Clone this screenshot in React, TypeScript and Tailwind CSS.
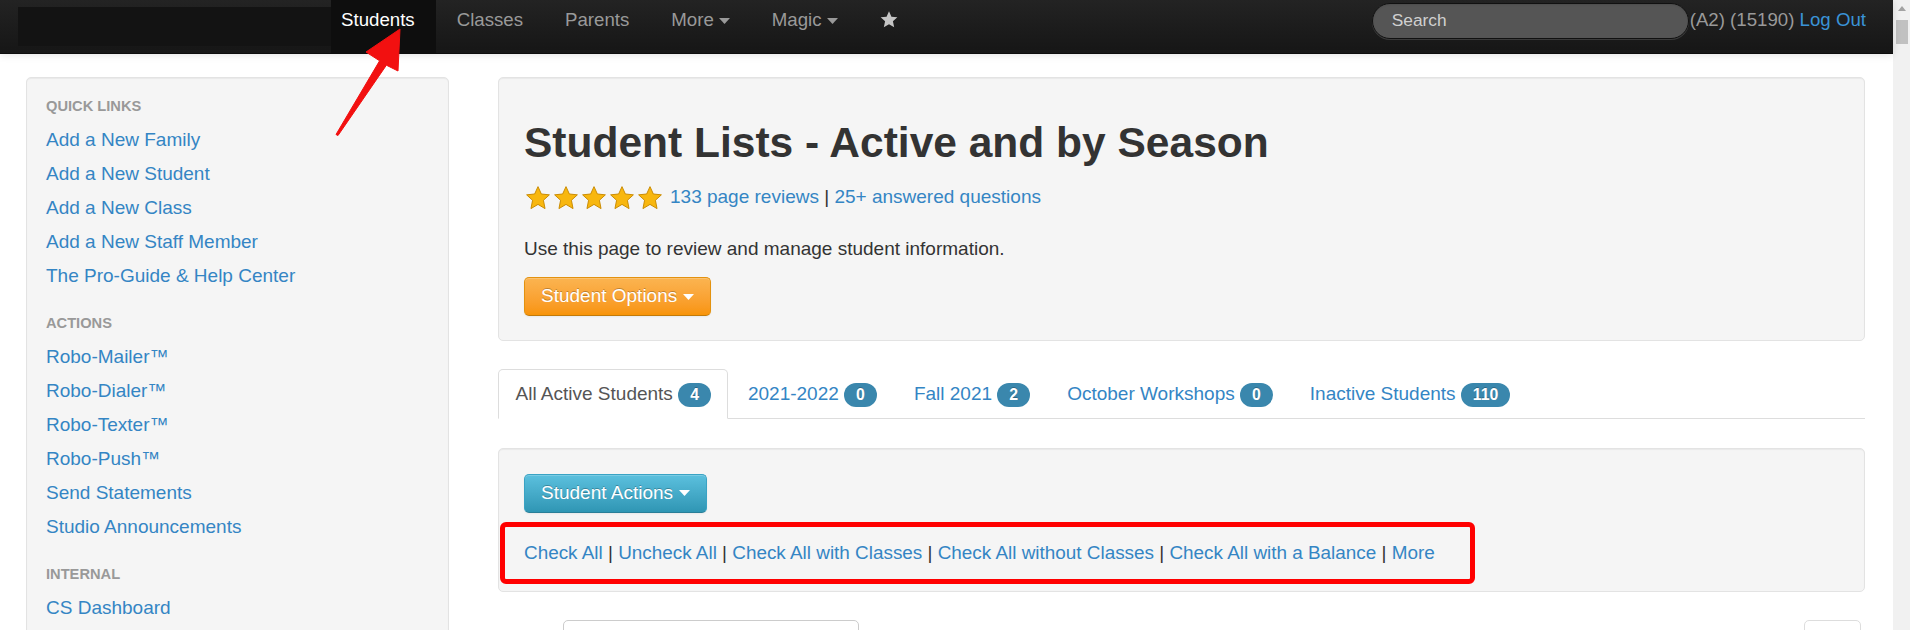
import React from "react";

function Caret({ className }: { className?: string }) {
  return (
    <svg width="11" height="6" viewBox="0 0 11 6" className={className}>
      <path d="M0 0H11L5.5 6Z" fill="currentColor" />
    </svg>
  );
}

function GoldStar() {
  return (
    <svg width="28" height="26" viewBox="0 0 24 24">
      <polygon
        points="12,1.5 15.1,8.3 22.5,9.1 17,14.1 18.5,21.8 12,17.9 5.5,21.8 7,14.1 1.5,9.1 8.9,8.3"
        fill="#f8b70f"
        stroke="#c98a00"
        strokeWidth="0.9"
        strokeLinejoin="round"
      />
    </svg>
  );
}

function Badge({ children }: { children: React.ReactNode }) {
  return (
    <span className="inline-block align-middle rounded-[12px] bg-[#3a87ad] px-[12px] text-[15.8px] font-bold leading-[24px] text-white [text-shadow:0_-1px_0_rgba(0,0,0,0.25)]">
      {children}
    </span>
  );
}

const quickLinks = [
  "Add a New Family",
  "Add a New Student",
  "Add a New Class",
  "Add a New Staff Member",
  "The Pro-Guide & Help Center",
];
const actionLinks = [
  "Robo-Mailer™",
  "Robo-Dialer™",
  "Robo-Texter™",
  "Robo-Push™",
  "Send Statements",
  "Studio Announcements",
];
const internalLinks = ["CS Dashboard"];

const tabs = [
  { label: "All Active Students", n: "4", active: true },
  { label: "2021-2022", n: "0" },
  { label: "Fall 2021", n: "2" },
  { label: "October Workshops", n: "0" },
  { label: "Inactive Students", n: "110" },
];

const checks = [
  "Check All",
  "Uncheck All",
  "Check All with Classes",
  "Check All without Classes",
  "Check All with a Balance",
  "More",
];

function SideHeading({ children, first }: { children: React.ReactNode; first?: boolean }) {
  return (
    <div
      className={
        first
          ? "h-[34px] flex items-center text-[14.67px] font-bold uppercase text-[#999]"
          : "mt-[13px] h-[34px] flex items-center text-[14.67px] font-bold uppercase text-[#999]"
      }
    >
      {children}
    </div>
  );
}

function SideLink({ children }: { children: React.ReactNode }) {
  return <a className="h-[34px] flex items-center text-[#3485c4]">{children}</a>;
}

export default function App() {
  return (
    <div className="relative flex h-[630px] w-[1910px] overflow-hidden bg-white font-['Liberation_Sans',Arial,sans-serif] text-[19px] text-[#333]">
      <div className="flex min-w-0 flex-1 flex-col">
        {/* Navbar */}
        <nav className="relative z-10 flex h-[54px] shrink-0 items-stretch border-b border-[#0c0c0c] bg-linear-to-b from-[#232323] to-[#161616] text-[18.67px] shadow-[0_1px_8px_rgba(0,0,0,0.12)]">
          <div className="ml-[18px] my-[7px] w-[313px] bg-[#131313]" />
          <a className="bg-[#0e0e0e] pl-[10px] pr-[21px] pt-[7px] leading-[26.67px] text-white">Students</a>
          <a className="px-[21px] pt-[7px] leading-[26.67px] text-[#999]">Classes</a>
          <a className="px-[21px] pt-[7px] leading-[26.67px] text-[#999]">Parents</a>
          <a className="flex items-start px-[21px] pt-[7px] leading-[26.67px] text-[#999]">
            <span>More</span>
            <Caret className="ml-[5px] mt-[11px]" />
          </a>
          <a className="flex items-start px-[21px] pt-[7px] leading-[26.67px] text-[#999]">
            <span>Magic</span>
            <Caret className="ml-[5px] mt-[11px]" />
          </a>
          <a className="px-[21px] pt-[11px] text-[#c4c4c4]">
            <svg width="18" height="17" viewBox="0 0 24 23">
              <polygon
                points="12,0.5 15.3,7.8 23.3,8.6 17.3,14 19,22 12,18 5,22 6.7,14 0.7,8.6 8.7,7.8"
                fill="currentColor"
              />
            </svg>
          </a>
          <div className="flex-1" />
          <div className="mt-[3px] flex h-[36px] w-[317px] items-center rounded-full border border-[#111] bg-[#555] pl-[19px] text-[17.33px] text-[#d0d0d0] shadow-[inset_0_1px_2px_rgba(0,0,0,0.1),0_1px_0_rgba(255,255,255,0.15)]">
            Search
          </div>
          <div className="ml-[1px] whitespace-nowrap pr-[27px] pt-[7px] leading-[26.67px] text-[#999]">
            (A2) (15190) <a className="text-[#3a93d6]">Log Out</a>
          </div>
        </nav>

        {/* Body */}
        <div className="flex gap-[49px] pl-[26px] pr-[28px] pt-[23px]">
          {/* Sidebar */}
          <aside className="w-[423px] shrink-0 self-start rounded-[5px] border border-[#e3e3e3] bg-[#f5f5f5] px-[19px] pb-[20px] pt-[11px] shadow-[inset_0_1px_1px_rgba(0,0,0,0.05)]">
            <SideHeading first>Quick Links</SideHeading>
            {quickLinks.map((l) => (
              <SideLink key={l}>{l}</SideLink>
            ))}
            <SideHeading>Actions</SideHeading>
            {actionLinks.map((l) => (
              <SideLink key={l}>{l}</SideLink>
            ))}
            <SideHeading>Internal</SideHeading>
            {internalLinks.map((l) => (
              <SideLink key={l}>{l}</SideLink>
            ))}
          </aside>

          {/* Main */}
          <main className="min-w-0 flex-1">
            <div className="rounded-[5px] border border-[#e3e3e3] bg-[#f5f5f5] px-[25px] pb-[24px] pt-[25px] shadow-[inset_0_1px_1px_rgba(0,0,0,0.05)]">
              <h1 className="mt-[13px] text-[42.5px] font-bold leading-[53px] text-[#333]">
                Student Lists - Active and by Season
              </h1>
              <div className="mt-[15px] flex h-[27px] items-center">
                <div className="mr-[6px] flex">
                  <GoldStar />
                  <GoldStar />
                  <GoldStar />
                  <GoldStar />
                  <GoldStar />
                </div>
                <span className="leading-[26.67px]">
                  <a className="text-[#3485c4]">133 page reviews</a> | <a className="text-[#3485c4]">25+ answered questions</a>
                </span>
              </div>
              <p className="mt-[24px] leading-[27px]">Use this page to review and manage student information.</p>
              <button
                type="button"
                className="mt-[15px] inline-flex h-[39px] items-center rounded-[5px] border border-[#e3920f] border-b-[#c27a0a] bg-linear-to-b from-[#fbb450] to-[#f89406] px-[16px] text-[19px] text-white shadow-[inset_0_1px_0_rgba(255,255,255,0.2),0_1px_2px_rgba(0,0,0,0.05)] [text-shadow:0_-1px_0_rgba(0,0,0,0.25)]"
              >
                Student Options
                <Caret className="ml-[6px]" />
              </button>
            </div>

            <ul className="mt-[28px] flex border-b border-[#ddd]">
              {tabs.map((t) => (
                <li key={t.label} className="-mb-px mr-[2px]">
                  <a
                    className={
                      t.active
                        ? "block whitespace-nowrap rounded-t-[5px] border border-[#ddd] border-b-transparent bg-white px-[16.5px] py-[10.67px] leading-[26.67px] text-[#555]"
                        : "block whitespace-nowrap rounded-t-[5px] border border-transparent px-[16.5px] py-[10.67px] leading-[26.67px] text-[#3485c4]"
                    }
                  >
                    {t.label} <Badge>{t.n}</Badge>
                  </a>
                </li>
              ))}
            </ul>

            <div className="relative mt-[29px] rounded-[5px] border border-[#e3e3e3] bg-[#f5f5f5] px-[25px] pb-[25px] pt-[25px] shadow-[inset_0_1px_1px_rgba(0,0,0,0.05)]">
              <button
                type="button"
                className="inline-flex h-[39px] items-center rounded-[5px] border border-[#3aa3c4] border-b-[#2a7f98] bg-linear-to-b from-[#5bc0de] to-[#2f96b4] px-[16px] text-[19px] text-white shadow-[inset_0_1px_0_rgba(255,255,255,0.2),0_1px_2px_rgba(0,0,0,0.05)] [text-shadow:0_-1px_0_rgba(0,0,0,0.25)]"
              >
                Student Actions
                <Caret className="ml-[6px]" />
              </button>
              <div className="mt-[26px] whitespace-nowrap text-[18.9px] leading-[27px]">
                {checks.map((c, i) => (
                  <React.Fragment key={c}>
                    {i > 0 && " | "}
                    <a className="text-[#3485c4]">{c}</a>
                  </React.Fragment>
                ))}
              </div>
              {/* red annotation box */}
              <div className="pointer-events-none absolute left-[1px] top-[73px] h-[62px] w-[975px] rounded-[6px] border-[5px] border-[#ff0000]" />
            </div>

            <div className="mt-[28px] flex items-start">
              <div className="w-[65px]" />
              <div className="h-[40px] w-[296px] rounded-[5px] border border-[#ccc] bg-white" />
              <div className="flex-1" />
              <div className="mr-[4px] h-[40px] w-[57px] rounded-[5px] border border-[#ddd] bg-white" />
            </div>
          </main>
        </div>
      </div>

      {/* Scrollbar */}
      <div className="flex w-[17px] shrink-0 flex-col items-center bg-[#f1f1f1]">
        <svg width="8" height="5" viewBox="0 0 8 5" className="mt-[6px]">
          <path d="M0 5L4 0L8 5Z" fill="#a3a3a3" />
        </svg>
        <div className="mt-[9px] h-[24px] w-[12px] bg-[#c1c1c1]" />
      </div>

      {/* red arrow annotation */}
      <svg
        className="pointer-events-none absolute left-[330px] top-[25px] z-20"
        width="75"
        height="115"
        viewBox="330 25 75 115"
      >
        <polygon
          points="400,29 366,52 379.6,60.8 336,134.5 338,135.5 386.4,65.2 398,71"
          fill="#f21010"
          stroke="#f21010"
          strokeWidth="1"
          strokeLinejoin="round"
        />
      </svg>
    </div>
  );
}
